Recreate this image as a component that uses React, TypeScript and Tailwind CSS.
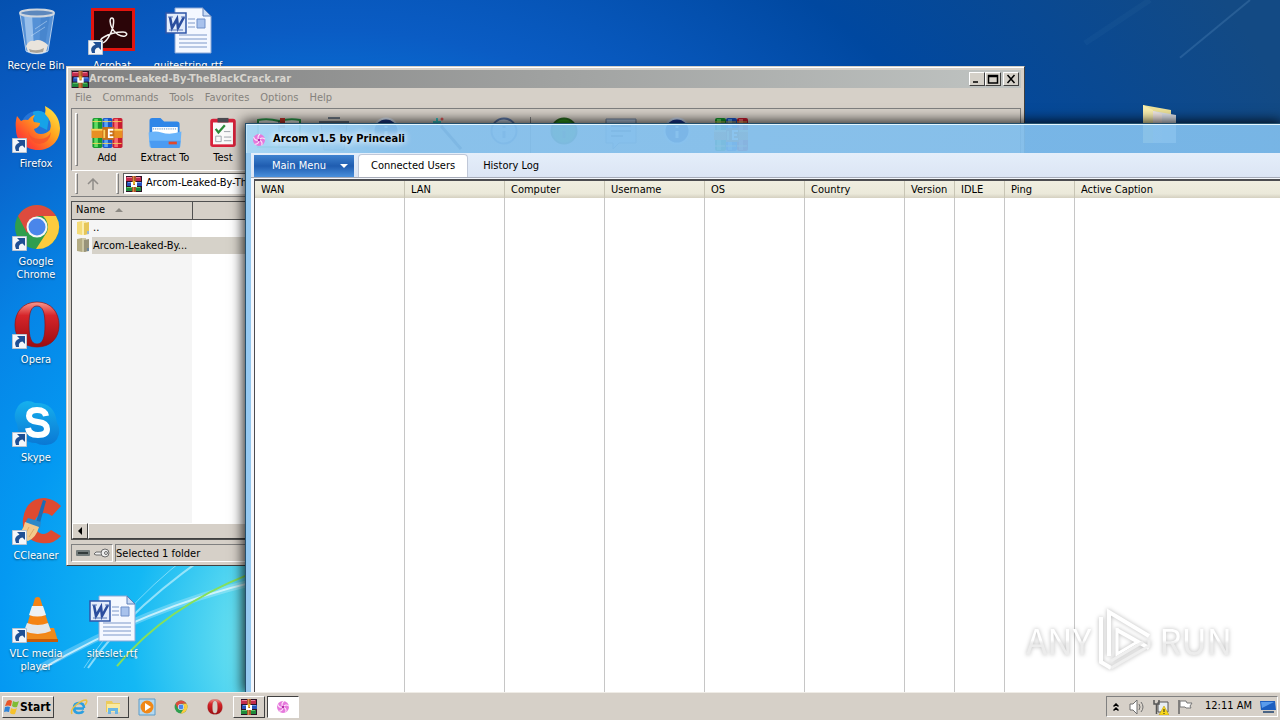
import type { ReactNode } from 'react'
import clsx from 'clsx'

const RAISED = 'border border-t-white border-l-white border-r-[#404040] border-b-[#404040]'
const SUNKEN = 'border border-t-[#808080] border-l-[#808080] border-r-white border-b-white'

function RarIcon({ className = 'size-4' }: { className?: string }) {
  return (
    <svg viewBox="0 0 16 16" className={className} aria-hidden="true">
      <path fill="#2c1226" d="M0 0h16v16H0z" />
      <path fill="#c22a4c" d="M0 1h15v4H0z" />
      <path fill="#ee7f9a" d="M1 1h13v1H1z" />
      <path fill="#2750b8" d="M1 6h15v4H1z" />
      <path fill="#6d9cf0" d="M2 6h13v1H2z" />
      <path fill="#1f8a3c" d="M0 11h15v4H0z" />
      <path fill="#63c86a" d="M1 11h13v1H1z" />
      <path fill="#a8572a" d="M6 0h4v16H6z" />
      <path fill="#d98a4a" d="M7 0h1v16H7z" />
      <path fill="#fff" d="M5 6h2v3h2V6h2v5H5z" />
      <path fill="#e6b52c" d="M7 5h2v3H7z" />
    </svg>
  )
}

function PinwheelIcon() {
  return (
    <svg viewBox="0 0 16 16" className="size-4" aria-hidden="true">
      <circle cx="8" cy="8" r="6" fill="#e678dc" />
      {[0, 72, 144, 216, 288].map(angle => (
        <path
          key={angle}
          d="M8 8Q5.500 4.500 9 2"
          fill="none"
          stroke="#fde6fa"
          strokeWidth="1.100"
          transform={`rotate(${angle} 8 8)`}
        />
      ))}
      <circle cx="8" cy="8" r="1.200" fill="#b428a8" />
    </svg>
  )
}

function BinIcon() {
  return (
    <svg viewBox="0 0 48 48" className="size-12" aria-hidden="true">
      <path d="M7 5h34l-6 40q-11 5-22 0z" fill="#7fb2e8" opacity=".65" />
      <path d="M11 7h8l2 35-7-3z" fill="#d9edff" opacity=".5" />
      <path d="M28 7l9 1-5 31-6 4z" fill="#3f7fc8" opacity=".6" />
      <path d="M13 39q3-6 8-5 6-3 14 4l-2 7q-9 4-18 0z" fill="#e9e4dc" />
      <path d="M16 42q8 3 15-1l-1 4q-7 2-13 0z" fill="#a9a398" />
      <path d="M22 22l12-8M18 29l14-9" stroke="#cfe5fa" opacity=".5" />
      <ellipse cx="24" cy="6" rx="17" ry="3.500" fill="#5d88bd" stroke="#cfd6de" strokeWidth="2" />
      <path d="M7 7l6 37q11 5 22 0l6-37" fill="none" stroke="#d4e4f4" opacity=".8" />
    </svg>
  )
}

function AcrobatIcon() {
  return (
    <svg viewBox="0 0 48 48" className="size-12" aria-hidden="true">
      <path d="M2 1h44v43H2z" fill="#e2140e" />
      <path d="M5 4h38v37H5z" fill="#2b0508" />
      <path
        d="M23 11c-3 0-2 6 0 10 3 6 9 9 13 8 3-1 2-4-2-4-7 0-14 2-19 5-4 2-5 6-2 6 4 0 9-9 11-16 1-5 1-9-1-9z"
        fill="none"
        stroke="#f6f2f0"
        strokeWidth="1.500"
      />
    </svg>
  )
}

function WordDocIcon() {
  return (
    <svg viewBox="0 0 48 48" className="size-12" aria-hidden="true">
      <path d="M10 1h28l8 8v37H10z" fill="#f4f8ff" stroke="#8da9d6" />
      <path d="M38 1v8h8z" fill="#c9dbf5" stroke="#5c7fb8" />
      <path d="M23 12h7M23 16h7M23 20h7M14 28h28M14 32h28M14 36h28M14 40h28" stroke="#7d97c9" strokeWidth="1.200" />
      <path d="M32 12h8v9h-8z" fill="#a8c2ec" stroke="#6f8fc8" />
      <path d="M1 6h20v20H1z" fill="#e3ecfb" stroke="#2f55a8" strokeWidth="1.500" />
      <path d="M5 10l2 11 5-9 1 9 6-11" fill="none" stroke="#2b4d9e" strokeWidth="2.600" />
      <path d="M3 10h5M16 10h4M4 23h14" stroke="#5876b8" strokeWidth="1.200" />
    </svg>
  )
}

function FirefoxIcon() {
  return (
    <svg viewBox="0 0 48 48" className="size-12" aria-hidden="true">
      <defs>
        <linearGradient id="fox" x1="1" y1="0" x2="0" y2="1">
          <stop offset="0" stopColor="#fff14a" />
          <stop offset=".4" stopColor="#ffa51e" />
          <stop offset=".75" stopColor="#ff4b2e" />
          <stop offset="1" stopColor="#e01e72" />
        </linearGradient>
      </defs>
      <circle cx="24" cy="22" r="16" fill="#2474d8" />
      <path d="M20 7q10-4 16 6l-2 12-12-6z" fill="#16a3e8" />
      <path
        d="M4 11l4 5q3-2 7-1 4-5 7-5-3 4-1 7l6 1q0 4-6 6 1 5 7 5 5 0 9-4 3-8-5-16 1-4 0-8 14 7 15 22c0 14-10 22-22 22S3 36 3 25q-1-8 1-14z"
        fill="url(#fox)"
      />
      <path d="M15 26q2 8 12 8 8 0 11-7-1 11-12 12-9-1-11-13z" fill="#f5502d" opacity=".75" />
    </svg>
  )
}

function ChromeIcon({ className = 'size-12' }: { className?: string }) {
  return (
    <svg viewBox="0 0 48 48" className={className} aria-hidden="true">
      <circle cx="24" cy="24" r="22" fill="#2f9e4e" />
      <path d="M5 13A22 22 0 0 1 43 13H24L14 30z" fill="#dd4b3e" />
      <path d="M43 13A22 22 0 0 1 23 46l11-17q3-9-4-16z" fill="#fccb3e" />
      <circle cx="24" cy="24" r="10.500" fill="#f5f5f5" />
      <circle cx="24" cy="24" r="8.500" fill="#4a86ea" />
    </svg>
  )
}

function OperaIcon({ className = 'size-12' }: { className?: string }) {
  return (
    <svg viewBox="0 0 48 48" className={className} aria-hidden="true">
      <defs>
        <linearGradient id="operaRed" x1="0" y1="0" x2="0" y2="1">
          <stop offset="0" stopColor="#f59a90" />
          <stop offset=".3" stopColor="#d6252a" />
          <stop offset="1" stopColor="#9c0c10" />
        </linearGradient>
      </defs>
      <path
        fillRule="evenodd"
        fill="url(#operaRed)"
        stroke="#8c1418"
        strokeWidth=".7"
        d="M24 1C10 1 2 11 2 24s8 22 22 22 22-9 22-22S38 1 24 1zm0 4c6 0 8 7 8 19s-2 19-8 19-8-7-8-19 2-19 8-19z"
      />
    </svg>
  )
}

function SkypeIcon() {
  return (
    <svg viewBox="0 0 48 48" className="size-12" aria-hidden="true">
      <defs>
        <linearGradient id="skypeBlue" x1="0" y1="0" x2="0" y2="1">
          <stop offset="0" stopColor="#16b0ee" />
          <stop offset="1" stopColor="#0a78d4" />
        </linearGradient>
      </defs>
      <path
        fill="url(#skypeBlue)"
        d="M14 2q5 0 8 2 20-1 22 20 3 5 2 11-3 12-15 11-5 0-8-2Q6 44 4 25 0 18 3 11 6 3 14 2z"
      />
      <path
        d="M33 17q-1-6-9-6-8 0-8 6 0 5 9 6 9 1 9 7 0 6-9 6-9 0-10-7"
        fill="none"
        stroke="#fff"
        strokeWidth="6"
      />
    </svg>
  )
}

function CCleanerIcon() {
  return (
    <svg viewBox="0 0 48 48" className="size-12" aria-hidden="true">
      <path d="M48 9l-9 10q-8-6-14 0-6 6-2 14 7 8 15 0l10 6q-8 9-20 7-20-3-18-24Q13 1 32 1q9 1 16 8z" fill="#de4a30" />
      <path d="M30 3l3 1-6 22-4-1z" fill="#1c6cb4" />
      <path d="M15 21l13 4-1 6-15-5z" fill="#2d88c8" />
      <path d="M12 25l14 5q-3 11-11 14L2 39q8-4 10-14z" fill="#f3c98c" />
      <path d="M16 30l-5 10M21 32l-5 8" stroke="#dfa866" />
    </svg>
  )
}

function VlcIcon() {
  return (
    <svg viewBox="0 0 48 48" className="size-12" aria-hidden="true">
      <path d="M8 33h33l4 13H4z" fill="#f08a1c" />
      <path d="M4 44h41v3H4z" fill="#c85c08" />
      <path d="M22 3q3-2 5 0l11 34q-13 7-26 0z" fill="#f58414" />
      <path d="M19 11h11l3 9q-9 3-17 0z" fill="#eef1f4" />
      <path d="M14 28q11 4 21 0l3 8q-13 6-27 0z" fill="#e4e7ea" />
    </svg>
  )
}

function ShortcutArrow() {
  return (
    <svg viewBox="0 0 15 15" className="absolute bottom-0 left-px size-[15px]" aria-hidden="true">
      <path d="M.5.500h14v14H.5z" fill="#f3f6fa" stroke="#b8c2cf" />
      <path d="M5 2h8v8l-2.500-2.500Q6 8 7 13h-3Q1 7 7.500 4.500z" fill="#1f4f94" />
    </svg>
  )
}

interface DesktopItemProps {
  label: string
  icon: ReactNode
  shortcut?: boolean
  place?: string
}

function DesktopItem({ label, icon, shortcut, place }: DesktopItemProps) {
  return (
    <button type="button" className={clsx('flex flex-col items-center gap-1 text-white', place)}>
      <span className="relative pl-0.5">
        {icon}
        {shortcut && <ShortcutArrow />}
      </span>
      <span className="text-center leading-[13px] [text-shadow:0_1px_2px_rgba(0,0,0,0.6)]">{label}</span>
    </button>
  )
}

const DESKTOP_ITEMS: DesktopItemProps[] = [
  { label: 'Recycle Bin', icon: <BinIcon />, place: 'col-start-1 row-start-1' },
  { label: 'Acrobat', icon: <AcrobatIcon />, shortcut: true, place: 'col-start-2 row-start-1' },
  { label: 'quitestring.rtf', icon: <WordDocIcon />, place: 'col-start-3 row-start-1' },
  { label: 'Firefox', icon: <FirefoxIcon />, shortcut: true, place: 'col-start-1 row-start-2' },
  { label: 'Google Chrome', icon: <ChromeIcon />, shortcut: true, place: 'col-start-1 row-start-3' },
  { label: 'Opera', icon: <OperaIcon />, shortcut: true, place: 'col-start-1 row-start-4' },
  { label: 'Skype', icon: <SkypeIcon />, shortcut: true, place: 'col-start-1 row-start-5' },
  { label: 'CCleaner', icon: <CCleanerIcon />, shortcut: true, place: 'col-start-1 row-start-6' },
  { label: 'VLC media player', icon: <VlcIcon />, shortcut: true, place: 'col-start-1 row-start-7' },
  { label: 'siteslet.rtf', icon: <WordDocIcon />, place: 'col-start-2 row-start-7' },
]

function Wallpaper() {
  return (
    <svg
      viewBox="0 0 1280 720"
      preserveAspectRatio="none"
      className="absolute inset-0 size-full"
      fill="none"
      aria-hidden="true"
    >
      <path d="M40 695Q150 630 260 604" stroke="#fff" strokeWidth="7" opacity=".25" />
      <path d="M40 697Q150 630 260 604" stroke="#e8fbff" strokeWidth="2" opacity=".75" />
      <path d="M88 695Q130 630 228 563" stroke="#d8f8ff" strokeWidth="2" opacity=".6" />
      <path d="M84 695Q130 620 208 563" stroke="#d8f8ff" opacity=".5" />
      <path d="M117 693Q165 632 250 597" stroke="#86e05a" strokeWidth="2" />
      <circle cx="226" cy="580" r="1.500" fill="#fff" />
      <circle cx="136" cy="684" r="1.500" fill="#fff" opacity=".7" />
      <circle cx="118" cy="586" r="1" fill="#fff" opacity=".7" />
      <circle cx="154" cy="583" r="1" fill="#fff" opacity=".7" />
      <path d="M1250 0L1180 60" stroke="#7fb0dc" strokeWidth="2" opacity=".2" />
      <path d="M1150 0L1085 45" stroke="#7fb0dc" strokeWidth="6" opacity=".05" />
    </svg>
  )
}

function AddIcon() {
  const books = [
    { x: 1, dark: '#16962e', light: '#5fdc62' },
    { x: 12, dark: '#1a55c8', light: '#58a4f6' },
    { x: 23, dark: '#c81c30', light: '#f86a70' },
  ]
  return (
    <svg viewBox="0 0 34 34" className="size-[34px]" aria-hidden="true">
      {books.map(book => (
        <g key={book.x}>
          <rect x={book.x} y="1" width="11" height="33" rx="2" fill={book.dark} />
          <path d={`M${book.x + 2} 2h4v31h-4z`} fill={book.light} />
          <path d={`M${book.x} 5h10M${book.x} 29h10`} stroke="#f3d45a" />
        </g>
      ))}
      <path d="M0 13h34v10H0z" fill="#e88f22" />
      <path d="M0 13h34v2H0z" fill="#fbd35e" />
      <path d="M12 11h13v14H12z" fill="#c87018" />
      <path d="M24 14h-5v8h5M19 18h4" fill="none" stroke="#fff" strokeWidth="2" />
      <path d="M14 14v9" stroke="#fbd35e" strokeWidth="2" />
    </svg>
  )
}

function ExtractIcon() {
  return (
    <svg viewBox="0 0 36 34" className="h-[34px] w-9" aria-hidden="true">
      <path d="M1 4q0-3 3-3h9l4 4h14q3 0 3 3v10H1z" fill="#2f86e8" />
      <path d="M4 11h28v12H4z" fill="#fff" />
      <path d="M5 13h26" stroke="#9cb8d8" strokeDasharray="1 1" strokeWidth="2" />
      <path d="M0 17q8-2 14 0 10 3 22-1l-1 15q0 3-3 3H4q-3 0-3-3z" fill="#6ab4fa" />
      <path d="M1 26h34l-1 8H3z" fill="#4a9bf2" />
      <path d="M22 27h9v3h-9z" fill="#e2492a" />
    </svg>
  )
}

function TestIcon() {
  return (
    <svg viewBox="0 0 30 34" className="h-[34px] w-[30px]" aria-hidden="true">
      <rect x="1" y="2" width="28" height="31" rx="3" fill="#d8213a" />
      <path d="M4 6h22v24H4z" fill="#fafafa" />
      <path d="M9 1h12v5H9z" fill="#4a4a50" />
      <path d="M7 13l3 4 7-8" fill="none" stroke="#2c8a3a" strokeWidth="2.500" />
      <path d="M7 21h6v6H7zM16 16h7M16 22h8M16 26h8" fill="none" stroke="#9aa0a8" />
    </svg>
  )
}

function ViewIcon() {
  return (
    <svg viewBox="0 0 44 34" className="h-[34px] w-11" aria-hidden="true">
      <path d="M1 3q10-2 21 1 11-3 21-1v27H1z" fill="#f4f4f0" stroke="#2a9648" strokeWidth="2" />
      <path d="M23 1h5v10h-5z" fill="#c0342a" />
      <path d="M22 4v27" stroke="#333" />
    </svg>
  )
}

function DeleteIcon() {
  return (
    <svg viewBox="0 0 32 34" className="h-[34px] w-8" aria-hidden="true">
      <path d="M3 6h26l-3 27H6z" fill="#aab4bf" stroke="#53606e" />
      <path d="M1 5h30M10 1h12" stroke="#6a7480" strokeWidth="2" />
    </svg>
  )
}

function OrbIcon({ fill, ring }: { fill: string; ring: string }) {
  return (
    <svg viewBox="0 0 28 34" className="h-[34px] w-7" aria-hidden="true">
      <circle cx="14" cy="14" r="12.500" fill={fill} stroke={ring} strokeWidth="2" />
      <path d="M14 9v2M14 14v7" stroke={ring} strokeWidth="3" />
    </svg>
  )
}

function WizardIcon() {
  return (
    <svg viewBox="0 0 30 34" className="h-[34px] w-[30px]" aria-hidden="true">
      <path d="M5 1v8M1 5h8" stroke="#3cc8c8" strokeWidth="2" />
      <path d="M9 9l20 23" stroke="#3c4a68" strokeWidth="3" />
      <circle cx="10" cy="2" r="1.500" fill="#e05858" />
    </svg>
  )
}

function CommentIcon() {
  return (
    <svg viewBox="0 0 32 34" className="h-[34px] w-8" aria-hidden="true">
      <path d="M1 2h30v24H14l-6 6v-6H1z" fill="#b9cbe2" stroke="#71839c" />
      <path d="M6 9h20M6 14h20M6 19h12" stroke="#5d7190" strokeWidth="2" />
    </svg>
  )
}

interface Tool {
  label: string
  icon: ReactNode
  width: string
  iconOnly?: boolean
}

const TOOLS: Tool[] = [
  { label: 'Add', icon: <AddIcon />, width: 'w-[58px]' },
  { label: 'Extract To', icon: <ExtractIcon />, width: 'w-[58px]' },
  { label: 'Test', icon: <TestIcon />, width: 'w-[58px]' },
  { label: 'View', icon: <ViewIcon />, width: 'w-[54px]', iconOnly: true },
  { label: 'Delete', icon: <DeleteIcon />, width: 'w-[56px]', iconOnly: true },
  { label: 'Find', icon: <OrbIcon fill="#1c3c8c" ring="#dfe8f5" />, width: 'w-[48px]', iconOnly: true },
  { label: 'Wizard', icon: <WizardIcon />, width: 'w-[74px]', iconOnly: true },
  { label: 'Info', icon: <OrbIcon fill="#c3cfdf" ring="#5d78a8" />, width: 'w-[40px]', iconOnly: true },
]

const EXTRA_TOOLS: Tool[] = [
  { label: 'Virus scan', icon: <OrbIcon fill="#2f9a1c" ring="#2a6a20" />, width: 'w-[54px]', iconOnly: true },
  { label: 'Comment', icon: <CommentIcon />, width: 'w-[60px]', iconOnly: true },
  { label: 'Protect', icon: <OrbIcon fill="#1c3c9c" ring="#cfdcf0" />, width: 'w-[52px]', iconOnly: true },
  { label: 'SFX', icon: <AddIcon />, width: 'w-[56px]', iconOnly: true },
]

function ToolButton({ label, icon, width, iconOnly }: Tool) {
  return (
    <button type="button" aria-label={label} className={clsx('flex shrink-0 flex-col items-center gap-0.5', width)}>
      {icon}
      {!iconOnly && <span className="leading-4 whitespace-nowrap">{label}</span>}
    </button>
  )
}

function FolderIcon({ dim }: { dim?: boolean }) {
  return (
    <svg viewBox="0 0 14 16" className="h-4 w-3.5" aria-hidden="true">
      <path d="M1 2l5-1v14l-5-1z" fill={dim ? '#b4ac84' : '#f5dc78'} />
      <path d="M6 1h4v14H6z" fill={dim ? '#ccc6a4' : '#fbeeb0'} />
      <path d="M8 3l5-1v12l-5 1z" fill={dim ? '#98937a' : '#e6c658'} />
      <path d="M11 11h2v3h-2z" fill={dim ? '#6a86a0' : '#98b8d8'} />
    </svg>
  )
}

function CaptionButton({ label, d }: { label: string; d: string }) {
  return (
    <button type="button" aria-label={label} className={clsx('flex h-3.5 w-4 items-center justify-center bg-[#d4d0c8]', RAISED)}>
      <svg viewBox="0 0 12 10" className="h-2.5 w-3" fill="none" stroke="#000" strokeWidth="1.500" aria-hidden="true">
        <path d={d} />
      </svg>
    </button>
  )
}

function Grip() {
  return <div className="w-[3px] shrink-0 border border-t-white border-r-[#808080] border-b-[#808080] border-l-white" />
}

function ArchiveWindow() {
  return (
    <section className="absolute top-[66px] left-[66px] flex h-[500px] w-[959px] flex-col border border-t-[#d4d0c8] border-r-[#404040] border-b-[#404040] border-l-[#d4d0c8] bg-[#d6d0c8]">
      <div className="flex flex-1 flex-col border-t border-l border-white px-[3px] pt-0.5 pb-[3px]">
        <header className="flex h-[18px] shrink-0 items-center bg-linear-to-r from-[#808080] to-[#c0c4c2] pr-0.5 pl-px">
          <RarIcon className="size-[17px]" />
          <h2 className="flex-1 pt-px font-bold text-[#d8d5ce]">Arcom-Leaked-By-TheBlackCrack.rar</h2>
          <div className="mr-0.5 flex">
            <CaptionButton label="Minimize" d="M2 8h5" />
            <CaptionButton label="Maximize" d="M1.500 1.500h9v7.500h-9zM1.500 2.500h9" />
          </div>
          <CaptionButton label="Close" d="M2.500 1l7 8M9.500 1l-7 8" />
        </header>
        <nav className="flex h-5 shrink-0 items-center gap-[11px] pt-px pl-1 text-[#85827d]">
          {['File', 'Commands', 'Tools', 'Favorites', 'Options', 'Help'].map(menu => (
            <button key={menu} type="button">
              {menu}
            </button>
          ))}
        </nav>

        <div className="flex h-[63px] shrink-0 border border-t-[#808080] border-r-[#808080] border-b-white border-l-[#808080] py-1 pl-[3px]">
          <Grip />
          <div className="flex pt-1">
            {TOOLS.map(tool => (
              <ToolButton key={tool.label} {...tool} />
            ))}
            <div className="mx-1.5 h-12 w-px bg-[#808080]" />
            {EXTRA_TOOLS.map(tool => (
              <ToolButton key={tool.label} {...tool} />
            ))}
          </div>
        </div>

        <div className="flex h-[26px] shrink-0 border-b border-[#808080] py-0.5 pl-1">
          <Grip />
          <button type="button" aria-label="Up one level" className="flex w-[38px] items-center justify-center pr-2">
            <svg viewBox="0 0 12 12" className="size-3" fill="none" stroke="#8f8c88" strokeWidth="1.500" aria-hidden="true">
              <path d="M6 12V2M1 6l5-5 5 5" />
            </svg>
          </button>
          <div className="flex flex-1 gap-1">
            <Grip />
            <label className="flex flex-1 items-center gap-1 border border-[#606060] border-r-white border-b-white bg-white pl-0.5">
              <RarIcon />
              <input
                aria-label="Archive path"
                readOnly
                defaultValue="Arcom-Leaked-By-TheBlackCrack.rar\Arcom-Leaked-By-TheBlackCrack - RAR archive"
                className="min-w-0 flex-1 outline-none"
              />
            </label>
          </div>
        </div>

        <div className="mt-1 flex min-h-0 flex-1 flex-col border border-t-[#505050] border-r-white border-b-[#505050] border-l-[#505050] bg-[linear-gradient(to_right,#f5f5f5_120px,#fff_120px)]">
          <table className="w-full table-fixed border-collapse text-left">
            <thead>
              <tr className="h-[17px] bg-[#d6d0c8]">
                <th className="w-[120px] border-r border-b border-[#505050] pl-1 font-normal">
                  <span className="flex items-center gap-2.5 leading-4">
                    Name
                    <svg viewBox="0 0 8 4" className="h-1 w-2" aria-hidden="true">
                      <path d="M0 4l4-4 4 4z" fill="#8c8983" />
                    </svg>
                  </span>
                </th>
                <th className="border-b border-[#505050]" aria-label="Size" />
              </tr>
            </thead>
            <tbody>
              <tr>
                <td className="pl-1">
                  <span className="flex h-[17px] items-center gap-0.5">
                    <FolderIcon />
                    <span className="pl-px">..</span>
                  </span>
                </td>
                <td />
              </tr>
              <tr>
                <td className="pl-1">
                  <span className="flex h-[17px] items-center gap-0.5">
                    <FolderIcon dim />
                    <span className="flex-1 bg-[#d6d2c9] pl-px leading-[17px]">Arcom-Leaked-By...</span>
                  </span>
                </td>
                <td className="bg-[#d6d2c9]" />
              </tr>
            </tbody>
          </table>
          <div className="mt-auto flex h-4 bg-[#eae7e2]">
            <button type="button" aria-label="Scroll left" className={clsx('flex w-4 items-center justify-center bg-[#d6d0c8]', RAISED)}>
              <svg viewBox="0 0 4 8" className="h-2 w-1" aria-hidden="true">
                <path d="M4 0v8L0 4z" />
              </svg>
            </button>
            <div className={clsx('flex-1 bg-[#d6d0c8]', RAISED)} />
          </div>
        </div>

        <footer className="mt-1 flex h-[18px] shrink-0 gap-0.5">
          <div className={clsx('flex w-[42px] items-center gap-1 pl-1', SUNKEN)}>
            <svg viewBox="0 0 14 6" className="h-1.5 w-3.5" aria-hidden="true">
              <rect width="14" height="6" rx="1" fill="#737b7b" />
              <path d="M2 2h10v2H2z" fill="#333b3b" />
            </svg>
            <svg viewBox="0 0 16 10" className="h-2.5 w-4" fill="none" stroke="#6b6b6b" aria-hidden="true">
              <path d="M8 4H2L0 6l2 1h7" fill="#eee" />
              <circle cx="11" cy="5" r="4" fill="#eee" />
              <circle cx="12" cy="5" r="1.500" />
            </svg>
          </div>
          <div className={clsx('flex-1 leading-[18px]', SUNKEN)}>Selected 1 folder</div>
        </footer>
      </div>
    </section>
  )
}

const COLUMNS = [
  { title: 'WAN', width: 'w-[150px]' },
  { title: 'LAN', width: 'w-[100px]' },
  { title: 'Computer', width: 'w-[100px]' },
  { title: 'Username', width: 'w-[100px]' },
  { title: 'OS', width: 'w-[100px]' },
  { title: 'Country', width: 'w-[100px]' },
  { title: 'Version', width: 'w-[50px]' },
  { title: 'IDLE', width: 'w-[50px]' },
  { title: 'Ping', width: 'w-[70px]' },
]

function ArcomWindow() {
  return (
    <section className="absolute top-[123px] right-0 bottom-0 left-[245px] flex flex-col border-t border-l border-[#24506e] shadow-[0_0_12px_2px_rgba(0,0,0,0.85)]">
      <header className="flex h-[29px] shrink-0 items-center gap-1.5 border-t border-l border-t-[#e4f6ff] border-l-[#c4e6fa] bg-linear-to-r from-[#a6d7f6]/95 via-[#84c0ed]/93 via-15% to-[#7fbdec]/93 pt-px pl-1">
        <PinwheelIcon />
        <h1 className="font-bold text-black [text-shadow:0_0_6px_#fff,0_0_8px_#fff]">Arcom v1.5 by Princeali</h1>
      </header>
      <div className="flex min-h-0 flex-1 flex-col border-l-5 border-[#94c8f0]">
        <div className="flex h-[25px] shrink-0 items-end border-b border-[#a6abb8] bg-linear-to-b from-[#e4eefa] to-[#dce5f4] pl-[3px]">
          <button
            type="button"
            className="flex h-[22px] w-[100px] items-center justify-between bg-linear-to-b from-[#3f83d0] via-[#1f5cb0] via-50% to-[#4a90dc] pr-1.5 pl-[18px] text-white"
          >
            Main Menu
            <svg viewBox="0 0 8 4" className="h-1 w-2" aria-hidden="true">
              <path d="M0 0h8L4 4z" fill="#fff" />
            </svg>
          </button>
          <div role="tablist" className="flex items-end pl-1">
            <button
              type="button"
              role="tab"
              aria-selected="true"
              className="h-[23px] rounded-t-sm border border-b-0 border-[#c0c8d8] bg-white px-3"
            >
              Connected Users
            </button>
            <button type="button" role="tab" aria-selected="false" className="h-[23px] px-[15px] pt-px">
              History Log
            </button>
          </div>
        </div>
        <div className="min-h-0 flex-1 bg-[#f4f7fc] pt-px pl-[3px]">
          <div className="h-full border-t-2 border-l border-[#4c4c50] bg-white">
            <table className="h-full w-full table-fixed border-separate border-spacing-0 text-left">
              <thead>
                <tr className="h-[17px] bg-linear-to-b from-[#f0eee0] via-[#ebe9da] via-75% to-[#d4d0c0]">
                  {COLUMNS.map(column => (
                    <th key={column.title} className={clsx('h-[17px] border-r border-[#c8c5b4] p-0 pl-1.5 leading-[17px] font-normal', column.width)}>
                      {column.title}
                    </th>
                  ))}
                  <th className="h-[17px] p-0 pl-1.5 leading-[17px] font-normal">Active Caption</th>
                </tr>
              </thead>
              <tbody>
                <tr>
                  {COLUMNS.map(column => (
                    <td key={column.title} className="border-r border-[#c6c6c6]" />
                  ))}
                  <td />
                </tr>
              </tbody>
            </table>
          </div>
        </div>
      </div>
    </section>
  )
}

function Watermark() {
  return (
    <div
      aria-hidden="true"
      className="absolute right-12 bottom-5 flex items-center gap-1.5 font-['Noto_Sans_CJK_SC',sans-serif] text-[35px] leading-[64px] drop-shadow-[0_0_2px_rgba(0,0,0,0.28)]"
    >
      <span className="bg-linear-to-b from-white from-50% to-[#ececec] to-55% bg-clip-text text-transparent">ANY</span>
      <svg viewBox="0 0 56 64" className="h-16 w-14" fill="none" stroke="#fff" strokeWidth="4">
        <path d="M4 9v45l10 6" />
        <path d="M12 48V4l40 24" />
        <path d="M20 22l32 18" />
        <path d="M20 20v26l22-13" strokeWidth="3" />
        <path d="M52 32v6L14 60M46 34L14 53" stroke="#efefef" strokeWidth="3" />
      </svg>
      <span className="bg-linear-to-b from-white from-50% to-[#ececec] to-55% bg-clip-text text-transparent">RUN</span>
    </div>
  )
}

function ExplorerIcon() {
  return (
    <svg viewBox="0 0 16 16" className="size-4" aria-hidden="true">
      <path d="M1 2h6l1 2h7v9H1z" fill="#eccb5c" />
      <path d="M2 5h13v8H2z" fill="#faeaa0" />
      <path d="M3 15V9h10v6h-3v-3H6v3z" fill="#6db7e4" />
    </svg>
  )
}

function IeIcon() {
  return (
    <svg viewBox="0 0 18 18" className="size-[18px]" fill="none" aria-hidden="true">
      <path d="M14 10.500H5M14 10q0-5-5-5t-5 5 5 5q3 0 4.500-2" stroke="#2c9fe0" strokeWidth="2.600" />
      <path d="M2 16Q0 12 6 7t10-5q2 1-1 5" stroke="#ecc040" strokeWidth="1.500" />
    </svg>
  )
}

function MediaIcon() {
  return (
    <svg viewBox="0 0 18 18" className="size-[18px]" aria-hidden="true">
      <path d="M1 1h16v16H1z" fill="#b4d8f0" stroke="#5c9cc8" />
      <circle cx="9" cy="9" r="6.500" fill="#f08818" />
      <path d="M7 5l6 4-6 4z" fill="#fff" />
    </svg>
  )
}

function TaskButton({ label, state, children }: { label: string; state?: 'open' | 'active'; children: ReactNode }) {
  return (
    <button
      type="button"
      aria-label={label}
      className={clsx(
        'flex h-[22px] w-8 items-center justify-center',
        state === 'open' && RAISED,
        state === 'active' && 'border border-t-[#404040] border-r-white border-b-white border-l-[#404040] bg-white',
      )}
    >
      {children}
    </button>
  )
}

function Taskbar() {
  return (
    <footer className="relative flex h-7 shrink-0 items-center border-t border-[#efece6] bg-[#d6d0c8] px-0.5">
      <button type="button" className={clsx('flex h-[22px] w-[52px] items-center pl-px text-xs font-bold', RAISED)}>
        <svg viewBox="0 0 16 16" className="size-4 shrink-0" aria-hidden="true">
          <path d="M3 2q3-2 5 0L7 7Q4 6 1 7z" fill="#e8562a" />
          <path d="M9 2q3 2 6 0l-2 6q-3 1-5-1z" fill="#7fbc34" />
          <path d="M1 8q3-1 5 0l-1 5q-3-1-5 0z" fill="#2f84d8" />
          <path d="M7 9q3 2 6 0l-2 6q-3 1-5-1z" fill="#f6c22c" />
        </svg>
        Start
      </button>
      <nav className="flex gap-0.5 pl-[9px]">
        <TaskButton label="Internet Explorer">
          <IeIcon />
        </TaskButton>
        <TaskButton label="Windows Explorer" state="open">
          <ExplorerIcon />
        </TaskButton>
        <TaskButton label="Media Player">
          <MediaIcon />
        </TaskButton>
        <TaskButton label="Chrome">
          <ChromeIcon className="size-3.5" />
        </TaskButton>
        <TaskButton label="Opera">
          <OperaIcon className="size-4" />
        </TaskButton>
        <TaskButton label="WinRAR" state="open">
          <RarIcon />
        </TaskButton>
        <TaskButton label="Arcom" state="active">
          <PinwheelIcon />
        </TaskButton>
      </nav>
      <div className={clsx('ml-auto flex h-[21px] items-center gap-2 pr-px pl-1.5', SUNKEN)}>
        <svg viewBox="0 0 6 8" className="h-2 w-1.5" fill="none" stroke="#000" strokeWidth="1.500" aria-hidden="true">
          <path d="M.5 3.500L3 1l2.500 2.500M.5 7.500L3 5l2.500 2.500" />
        </svg>
        <svg viewBox="0 0 16 16" className="ml-0.5 size-4" fill="none" stroke="#6f6f6f" aria-hidden="true">
          <path d="M1 5h3l4-4v14l-4-4H1z" fill="#fff" />
          <path d="M10 5q2 3 0 6M12 3q4 5 0 10" />
        </svg>
        <svg viewBox="0 0 16 16" className="size-4" aria-hidden="true">
          <path d="M5 3h10v10H5z" fill="#e8eef2" stroke="#555" />
          <path d="M1 1v4h5V1M3.500 5v10" fill="none" stroke="#555" strokeWidth="1.500" />
          <path d="M11 7l5 9H6z" fill="#f8d81c" stroke="#b89408" strokeWidth=".5" />
          <path d="M11 10v3M11 14v1" stroke="#222" />
        </svg>
        <svg viewBox="0 0 16 16" className="size-4" aria-hidden="true">
          <path d="M2 1v14" stroke="#666" strokeWidth="1.500" />
          <path d="M3 2h6l1 2h5l-2 3 1 2H9L8 8H3z" fill="#fff" stroke="#777" />
        </svg>
        <time className="ml-1">12:11 AM</time>
        <svg viewBox="0 0 16 14" className="h-3.5 w-4" aria-hidden="true">
          <path d="M0 1h15l1 9H1z" fill="#1c5fc0" />
          <path d="M1 2h13L2 8z" fill="#5a9cec" />
          <path d="M3 11h11v2H3z" fill="#4a6484" />
        </svg>
      </div>
    </footer>
  )
}

export default function App() {
  return (
    <div className="flex h-screen flex-col overflow-hidden font-['DejaVu_Sans_Condensed','DejaVu_Sans',sans-serif] text-[11px] text-black select-none">
      <main className="relative min-h-0 flex-1 overflow-hidden bg-[radial-gradient(circle_at_330px_640px,#b8f2f0_0px,#60dcf0_100px,#14b8f4_200px,#0499f2_330px,#0684e6_450px,#0a5cc4_610px,#0048a0_800px,#134a84_1100px)]">
        <Wallpaper />
        <div className="relative grid w-max auto-rows-[98px] grid-cols-[72px_72px_72px] gap-x-1 pt-[7px]">
          {DESKTOP_ITEMS.map(item => (
            <DesktopItem key={item.label} {...item} />
          ))}
        </div>
        <svg viewBox="0 0 34 40" className="absolute top-[105px] right-[104px] h-10 w-[34px]" aria-hidden="true">
          <path d="M1 0l28 5v30L1 38z" fill="#f0e49a" />
          <path d="M1 0l10 5v33H1z" fill="#faf0b0" />
          <path d="M11 6l23 4v28H11z" fill="#dfe3ea" />
          <path d="M11 6l9 3v28l-9 1z" fill="#f2e8e4" />
        </svg>
        <ArchiveWindow />
        <ArcomWindow />
        <Watermark />
      </main>
      <Taskbar />
    </div>
  )
}
